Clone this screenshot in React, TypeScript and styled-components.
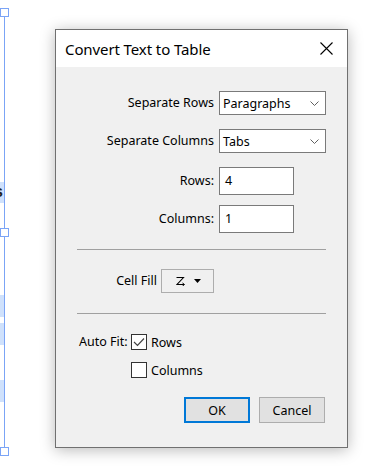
import styled, { createGlobalStyle } from 'styled-components';

const GlobalStyle = createGlobalStyle`
  html, body {
    margin: 0;
    padding: 0;
    background: #ffffff;
  }
  body {
    font-family: "Noto Sans", "Open Sans", Arial, sans-serif;
    font-size: 12.5px;
    color: #000000;
  }
`;

const Page = styled.div`
  position: relative;
  width: 370px;
  height: 467px;
  overflow: hidden;
  background: #ffffff;
  padding: 29px 0 0 55px;
  box-sizing: border-box;
`;

// frame selection on the document behind the dialog
const SelectionLine = styled.div`
  position: absolute;
  left: 4px;
  top: 12px;
  width: 1px;
  height: 440px;
  background: #7ba4f6;
`;

const Handle = styled.div<{ $top: number }>`
  position: absolute;
  left: 0;
  top: ${(p) => p.$top}px;
  width: 9px;
  height: 9px;
  box-sizing: border-box;
  border: 1px solid #7ba4f6;
  background: #ffffff;
`;

const Band = styled.div<{ $top: number; $height: number }>`
  position: absolute;
  left: 0;
  top: ${(p) => p.$top}px;
  width: 4px;
  height: ${(p) => p.$height}px;
  background: #cfe1fc;
  overflow: hidden;
`;

const BandGlyph = styled.span`
  position: absolute;
  right: 1px;
  top: 1px;
  font-family: "Liberation Sans", Arial, sans-serif;
  font-weight: bold;
  font-size: 16px;
  color: #222;
`;

const Dialog = styled.div`
  position: relative;
  width: 293px;
  height: 419px;
  box-sizing: border-box;
  border: 1px solid #707070;
  background: #f0f0f0;
  box-shadow: 0 2px 14px rgba(0, 0, 0, 0.28);
  display: flex;
  flex-direction: column;
`;

const TitleBar = styled.div`
  height: 37px;
  flex: none;
  background: #ffffff;
  display: flex;
  align-items: center;
  justify-content: space-between;
  padding: 0 14px 0 9px;
`;

const Title = styled.span`
  font-size: 15px;
  letter-spacing: -0.1px;
`;

const Body = styled.div`
  flex: 1;
  display: flex;
  flex-direction: column;
  padding: 24px 0 24px 0;
`;

const FieldRow = styled.div`
  display: grid;
  grid-template-columns: 158px auto;
  column-gap: 5px;
  height: 38px;
  align-items: start;
`;

const Label = styled.span<{ $h: number }>`
  text-align: right;
  line-height: ${(p) => p.$h}px;
  white-space: nowrap;
`;

const Select = styled.div`
  width: 107px;
  height: 24px;
  box-sizing: border-box;
  border: 1px solid #7a7a7a;
  background: #ffffff;
  display: flex;
  align-items: center;
  justify-content: space-between;
  padding: 0 6px 0 3px;
`;

const TextInput = styled.div`
  width: 75px;
  height: 28px;
  box-sizing: border-box;
  border: 1px solid #7a7a7a;
  background: #ffffff;
  padding: 4px 0 0 5px;
`;

const Separator = styled.div<{ $top: number }>`
  height: 1px;
  background: #a0a0a0;
  margin: ${(p) => p.$top}px 21px 0 21px;
`;

const FillRow = styled.div`
  display: grid;
  grid-template-columns: 101px auto;
  column-gap: 4px;
  margin-top: 19px;
  align-items: center;
`;

const FillButton = styled.div`
  width: 53px;
  height: 24px;
  box-sizing: border-box;
  border: 1px solid #adadad;
  background: #f0f0f0;
  display: flex;
  align-items: center;
  justify-content: center;
  gap: 8px;
  padding-left: 2px;
`;

const AutoFit = styled.div`
  display: grid;
  grid-template-columns: 52px auto;
  margin: 20px 0 0 23px;
  align-items: start;
`;

const AutoFitLabel = styled.span`
  line-height: 14px;
  margin-top: 1px;
`;

const CheckList = styled.div`
  display: flex;
  flex-direction: column;
  gap: 12px;
`;

const CheckRow = styled.div`
  display: flex;
  align-items: center;
  gap: 4px;
  height: 16px;
`;

const Box = styled.div`
  width: 16px;
  height: 16px;
  box-sizing: border-box;
  border: 1px solid #333333;
  background: #ffffff;
  display: flex;
  align-items: center;
  justify-content: center;
`;

const CheckText = styled.span`
  line-height: 16px;
  margin-top: 2px;
`;

const ButtonBar = styled.div`
  margin-top: auto;
  display: flex;
  justify-content: flex-end;
  gap: 9px;
  padding-right: 22px;
`;

const Button = styled.div<{ $default?: boolean }>`
  width: 66px;
  height: 26px;
  box-sizing: border-box;
  border: ${(p) => (p.$default ? '2px solid #0078d7' : '1px solid #adadad')};
  background: #e1e1e1;
  display: flex;
  align-items: center;
  justify-content: center;
`;

const Chevron = () => (
  <svg width="9" height="5" viewBox="0 0 9 5">
    <path d="M0.5 0.5 L4.5 4.5 L8.5 0.5" fill="none" stroke="#606060" strokeWidth="1" />
  </svg>
);

const CloseIcon = () => (
  <svg width="13" height="13" viewBox="0 0 13 13">
    <path d="M0.5 0.5 L12.5 12.5 M12.5 0.5 L0.5 12.5" fill="none" stroke="#000" strokeWidth="1.1" />
  </svg>
);

const FillIcon = () => (
  <svg width="10" height="9" viewBox="0 0 10 9">
    <path d="M0.5 0.5 H7.5 L1 7.5 H8" fill="none" stroke="#000" strokeWidth="1.1" />
    <path d="M6.5 6 L8.5 7.5 L6.5 9" fill="none" stroke="#000" strokeWidth="1" />
  </svg>
);

const TriangleDown = () => (
  <svg width="7" height="4" viewBox="0 0 7 4">
    <path d="M0 0 H7 L3.5 4 Z" fill="#000" />
  </svg>
);

const CheckMark = () => (
  <svg width="12" height="10" viewBox="0 0 12 10">
    <path d="M1 5 L4.5 8.5 L11 1.5" fill="none" stroke="#444" strokeWidth="1.2" />
  </svg>
);

export default function App() {
  return (
    <>
      <GlobalStyle />
      <Page>
        <SelectionLine />
        <Band $top={182} $height={21}>
          <BandGlyph>s</BandGlyph>
        </Band>
        <Band $top={295} $height={22} />
        <Band $top={323} $height={22} />
        <Band $top={380} $height={22} />
        <Handle $top={8} />
        <Handle $top={228} />
        <Handle $top={447} />

        <Dialog>
          <TitleBar>
            <Title>Convert Text to Table</Title>
            <CloseIcon />
          </TitleBar>
          <Body>
            <FieldRow>
              <Label $h={24}>Separate Rows</Label>
              <Select>
                <span>Paragraphs</span>
                <Chevron />
              </Select>
            </FieldRow>
            <FieldRow>
              <Label $h={24}>Separate Columns</Label>
              <Select>
                <span>Tabs</span>
                <Chevron />
              </Select>
            </FieldRow>
            <FieldRow>
              <Label $h={28}>Rows:</Label>
              <TextInput>4</TextInput>
            </FieldRow>
            <FieldRow>
              <Label $h={28}>Columns:</Label>
              <TextInput>1</TextInput>
            </FieldRow>

            <Separator $top={6} />

            <FillRow>
              <Label $h={24}>Cell Fill</Label>
              <FillButton>
                <FillIcon />
                <TriangleDown />
              </FillButton>
            </FillRow>

            <Separator $top={20} />

            <AutoFit>
              <AutoFitLabel>Auto Fit:</AutoFitLabel>
              <CheckList>
                <CheckRow>
                  <Box>
                    <CheckMark />
                  </Box>
                  <CheckText>Rows</CheckText>
                </CheckRow>
                <CheckRow>
                  <Box />
                  <CheckText>Columns</CheckText>
                </CheckRow>
              </CheckList>
            </AutoFit>

            <ButtonBar>
              <Button $default>OK</Button>
              <Button>Cancel</Button>
            </ButtonBar>
          </Body>
        </Dialog>
      </Page>
    </>
  );
}
